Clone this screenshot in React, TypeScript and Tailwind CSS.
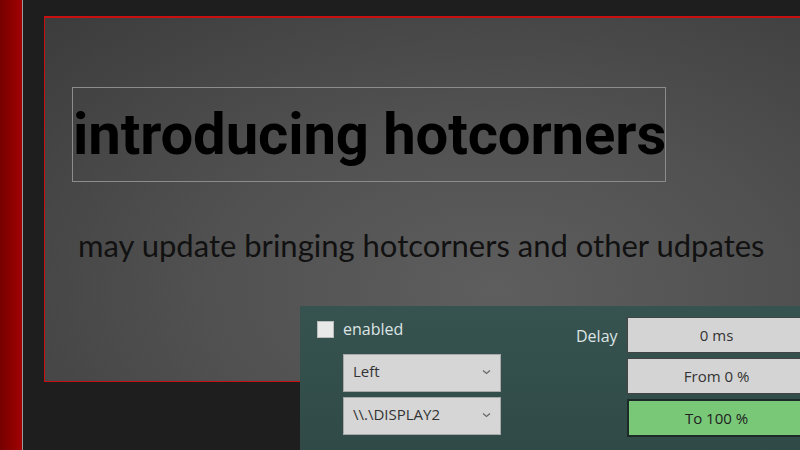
import React from "react";

function Chevron() {
  return (
    <svg width="9" height="6" viewBox="0 0 9 6" className="text-[#666]">
      <path d="M1 1.5 L4.5 4.5 L8 1.5" fill="none" stroke="currentColor" strokeWidth="1.2" />
    </svg>
  );
}

function Select({ label }: { label: string }) {
  return (
    <div className="flex h-[38px] w-[158px] items-center justify-between border border-[#a8a8a8] bg-[#d6d6d6] pb-[3px] pl-[9px] pr-[9px] text-[15px] text-[#333]">
      <span>{label}</span>
      <Chevron />
    </div>
  );
}

export default function App() {
  return (
    <div className="relative flex h-[450px] w-[800px] overflow-hidden bg-[#1e1e1e] font-['Open_Sans',sans-serif]">
      {/* red strip */}
      <div className="h-full w-[23px] shrink-0 border-r border-[#9a9a9a] bg-gradient-to-r from-[#760000] to-[#a20303]" />

      {/* slide */}
      <div className="flex flex-col pl-[21px] pt-[16px]">
        <div className="h-[366px] w-[820px] shrink-0 border border-t-2 border-[#c81010] bg-[radial-gradient(ellipse_at_55%_75%,#5e5e5e_0%,#515151_45%,#3c3c3c_100%)]">
          <div className="ml-[27px] mt-[69px] flex h-[95px] w-[594px] items-center overflow-visible border border-[#8c8c8c]">
            <span className="-mt-[2px] whitespace-nowrap font-['Roboto',sans-serif] text-[58px] font-bold leading-none tracking-[-0.1px] text-black">
              introducing hotcorners
            </span>
          </div>
          <div className="ml-[33px] mt-[48px] whitespace-nowrap font-['Lato',sans-serif] text-[31px] leading-none text-[#111]">
            may update bringing hotcorners and other udpates
          </div>
        </div>
      </div>

      {/* settings panel photo */}
      <div className="absolute left-[300px] top-[306px] h-[144px] w-[500px] bg-gradient-to-b from-[#37534f] to-[#2f4a47] font-['Open_Sans',sans-serif]">
        <div className="flex">
          <div className="flex flex-col pl-[17px] pt-[11px]">
            <div className="flex items-center gap-[9px]">
              <div className="h-[17px] w-[17px] border border-[#bbb] bg-[#e8e8e8]" />
              <span className="text-[16px] text-[#dce4e4]">enabled</span>
            </div>
            <div className="ml-[26px] mt-[13px] flex flex-col gap-[5px]">
              <Select label="Left" />
              <Select label="\\.\DISPLAY2" />
            </div>
          </div>
          <div className="ml-[75px] pt-[18px] text-[16px] text-[#dce4e4]">Delay</div>
          <div className="ml-[9px] flex flex-col gap-[5px] pt-[11px]">
            <div className="flex h-[36px] w-[180px] items-center justify-center border border-[#444] bg-[#d4d4d4] text-[15px] text-[#333]">
              0 ms
            </div>
            <div className="flex h-[36px] w-[180px] items-center justify-center border border-[#444] bg-[#d4d4d4] text-[15px] text-[#333]">
              From 0 %
            </div>
            <div className="flex h-[38px] w-[180px] items-center justify-center border-2 border-[#1c2a28] bg-[#78c878] text-[15px] text-[#222]">
              To 100 %
            </div>
          </div>
        </div>
      </div>
    </div>
  );
}
